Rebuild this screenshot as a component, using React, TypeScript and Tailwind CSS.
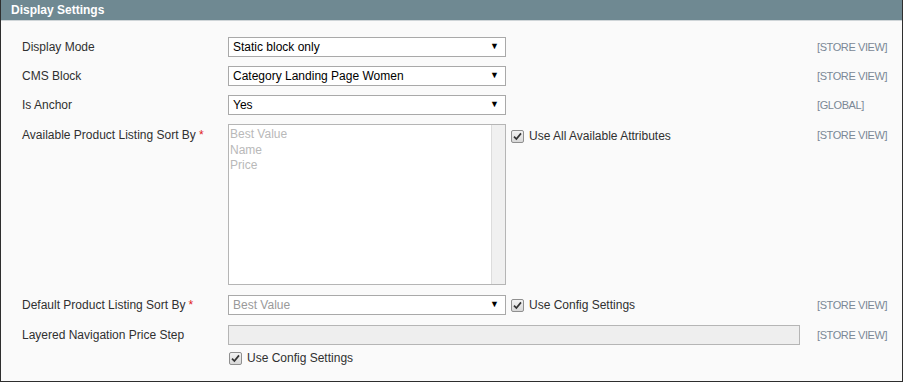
import React from "react";

const font = { fontFamily: '"Liberation Sans", Arial, sans-serif' };

function Check() {
  return (
    <span className="inline-flex h-[13px] w-[13px] shrink-0 items-center justify-center rounded-[2px] border border-[#8f8f8f] bg-[linear-gradient(#f2f2f2,#d8d8d8)]">
      <svg width="9" height="9" viewBox="0 0 9 9">
        <path d="M1 4.6 L3.4 7 L8 1.4" fill="none" stroke="#333" strokeWidth="1.7" />
      </svg>
    </span>
  );
}

function Select({ value, muted }: { value: string; muted?: boolean }) {
  return (
    <div className="flex h-[20px] w-[278px] items-center justify-between border border-[#a9a9a9] bg-white pl-[4px] pr-[6px]">
      <span className={muted ? "text-[#9a9a9a]" : "text-black"}>{value}</span>
      <span className="text-[9px] text-black">▼</span>
    </div>
  );
}

function Scope({ t }: { t: string }) {
  return <div className="text-[11px] tracking-[-0.4px] text-[#7a8896]">{t}</div>;
}

function Req() {
  return <span className="ml-[3px] text-[#e02020]">*</span>;
}

export default function App() {
  return (
    <div
      className="flex h-[382px] w-[903px] flex-col border-x border-b border-x-[#2e2e2e] border-b-[#2e2e2e] bg-[#fafafa] text-[12px] text-[#303030]"
      style={font}
    >
      <div className="flex h-[21px] items-center border-b border-[#cfd5d8] bg-[#6f8992] pl-[10px] font-bold text-white">
        Display Settings
      </div>
      <div className="flex flex-col pl-[21px] pt-[16px]">
        <div className="flex h-[20px] items-center">
          <div className="w-[206px]">Display Mode</div>
          <div className="w-[589px]"><Select value="Static block only" /></div>
          <Scope t="[STORE VIEW]" />
        </div>
        <div className="mt-[9px] flex h-[20px] items-center">
          <div className="w-[206px]">CMS Block</div>
          <div className="w-[589px]"><Select value="Category Landing Page Women" /></div>
          <Scope t="[STORE VIEW]" />
        </div>
        <div className="mt-[9px] flex h-[20px] items-center">
          <div className="w-[206px]">Is Anchor</div>
          <div className="w-[589px]"><Select value="Yes" /></div>
          <Scope t="[GLOBAL]" />
        </div>
        <div className="mt-[9px] flex items-start">
          <div className="w-[206px] pt-[2px]">Available Product Listing Sort By<Req /></div>
          <div className="flex w-[589px] items-start">
            <div className="flex h-[161px] w-[278px] border border-[#b5b5b5] bg-white">
              <div className="flex flex-1 flex-col pl-[1px] pt-[2px] leading-[15.5px] text-[#b9b9b9]">
                <span>Best Value</span>
                <span>Name</span>
                <span>Price</span>
              </div>
              <div className="w-[14px] border-l border-[#dcdcdc] bg-[#f0f0f0]" />
            </div>
            <div className="ml-[5px] mt-[3px] flex items-center gap-[5px]">
              <Check />
              <span>Use All Available Attributes</span>
            </div>
          </div>
          <div className="pt-[3px]"><Scope t="[STORE VIEW]" /></div>
        </div>
        <div className="mt-[10px] flex h-[20px] items-center">
          <div className="w-[206px]">Default Product Listing Sort By<Req /></div>
          <div className="flex w-[589px] items-center">
            <Select value="Best Value" muted />
            <div className="ml-[5px] flex items-center gap-[5px]">
              <Check />
              <span>Use Config Settings</span>
            </div>
          </div>
          <Scope t="[STORE VIEW]" />
        </div>
        <div className="mt-[10px] flex h-[20px] items-center">
          <div className="w-[206px]">Layered Navigation Price Step</div>
          <div className="w-[589px]">
            <div className="h-[20px] w-[572px] border border-[#b5b5b5] bg-[#eeeeee]" />
          </div>
          <Scope t="[STORE VIEW]" />
        </div>
        <div className="mt-[4px] flex items-center">
          <div className="w-[207px]" />
          <div className="flex items-center gap-[5px]">
            <Check />
            <span>Use Config Settings</span>
          </div>
        </div>
      </div>
    </div>
  );
}
